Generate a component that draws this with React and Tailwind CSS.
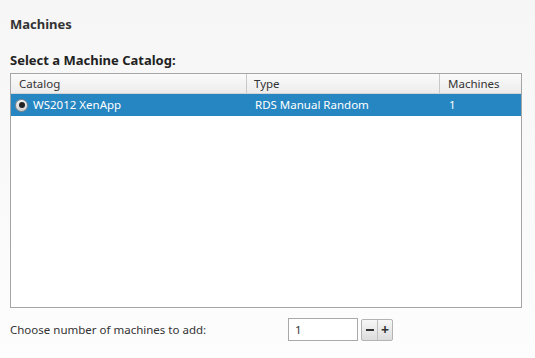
export default function App() {
  return (
    <div className="w-[535px] h-[358px] bg-gradient-to-b from-[#f6f6f6] to-[#fdfdfd] text-[#333] font-['Noto_Sans',sans-serif] overflow-hidden">
      <div className="pt-[15px] pl-[10px] pr-[13px]">
        <h2 className="text-[13px] font-bold leading-[18px]">Machines</h2>
        <p className="mt-[19px] text-[13px] font-bold leading-[17px] text-[#222]">Select a Machine Catalog:</p>

        {/* Catalog list */}
        <div className="mt-[4px] h-[235px] bg-white border border-[#a5a5a5]">
          <div className="flex h-[20px] bg-gradient-to-b from-[#fbfbfb] to-[#ececec] border-b border-[#d4d4d4] text-[11.5px] leading-[19px] text-[#333]">
            <div className="w-[236px] pl-[8px] border-r border-[#c8c8c8]">Catalog</div>
            <div className="w-[193px] pl-[7px] border-r border-[#c8c8c8]">Type</div>
            <div className="flex-1 pl-[8px]">Machines</div>
          </div>
          <div className="flex items-center h-[22px] bg-[#2686c2] text-white text-[11.5px]">
            <div className="w-[237px] flex items-center pl-[4px] gap-[5px]">
              <span className="w-[13px] h-[13px] rounded-full bg-gradient-to-b from-[#f4f4f4] to-[#cfcfcf] border border-[#8a8a8a] flex items-center justify-center">
                <span className="w-[6px] h-[6px] rounded-full bg-[#222]" />
              </span>
              WS2012 XenApp
            </div>
            <div className="w-[193px] pl-[7px]">RDS Manual Random</div>
            <div className="flex-1 pl-[8px]">1</div>
          </div>
        </div>

        <div className="flex items-center mt-[10px] text-[11.5px]">
          <span className="w-[278px]">Choose number of machines to add:</span>
          <div className="w-[70px] h-[23px] bg-white border border-[#a9a9a9] pl-[6px] leading-[21px]">1</div>
          <div className="ml-[3px] flex h-[22px] border border-[#b3b3b3] rounded-[2px] bg-gradient-to-b from-[#f7f7f7] to-[#dcdcdc]">
            <span className="w-[16px] flex items-center justify-center border-r border-[#c0c0c0]">
              <span className="w-[8px] h-[2px] bg-[#333]" />
            </span>
            <span className="w-[14px] flex items-center justify-center text-[14px] font-bold leading-none text-[#333]">+</span>
          </div>
        </div>
      </div>
    </div>
  );
}
